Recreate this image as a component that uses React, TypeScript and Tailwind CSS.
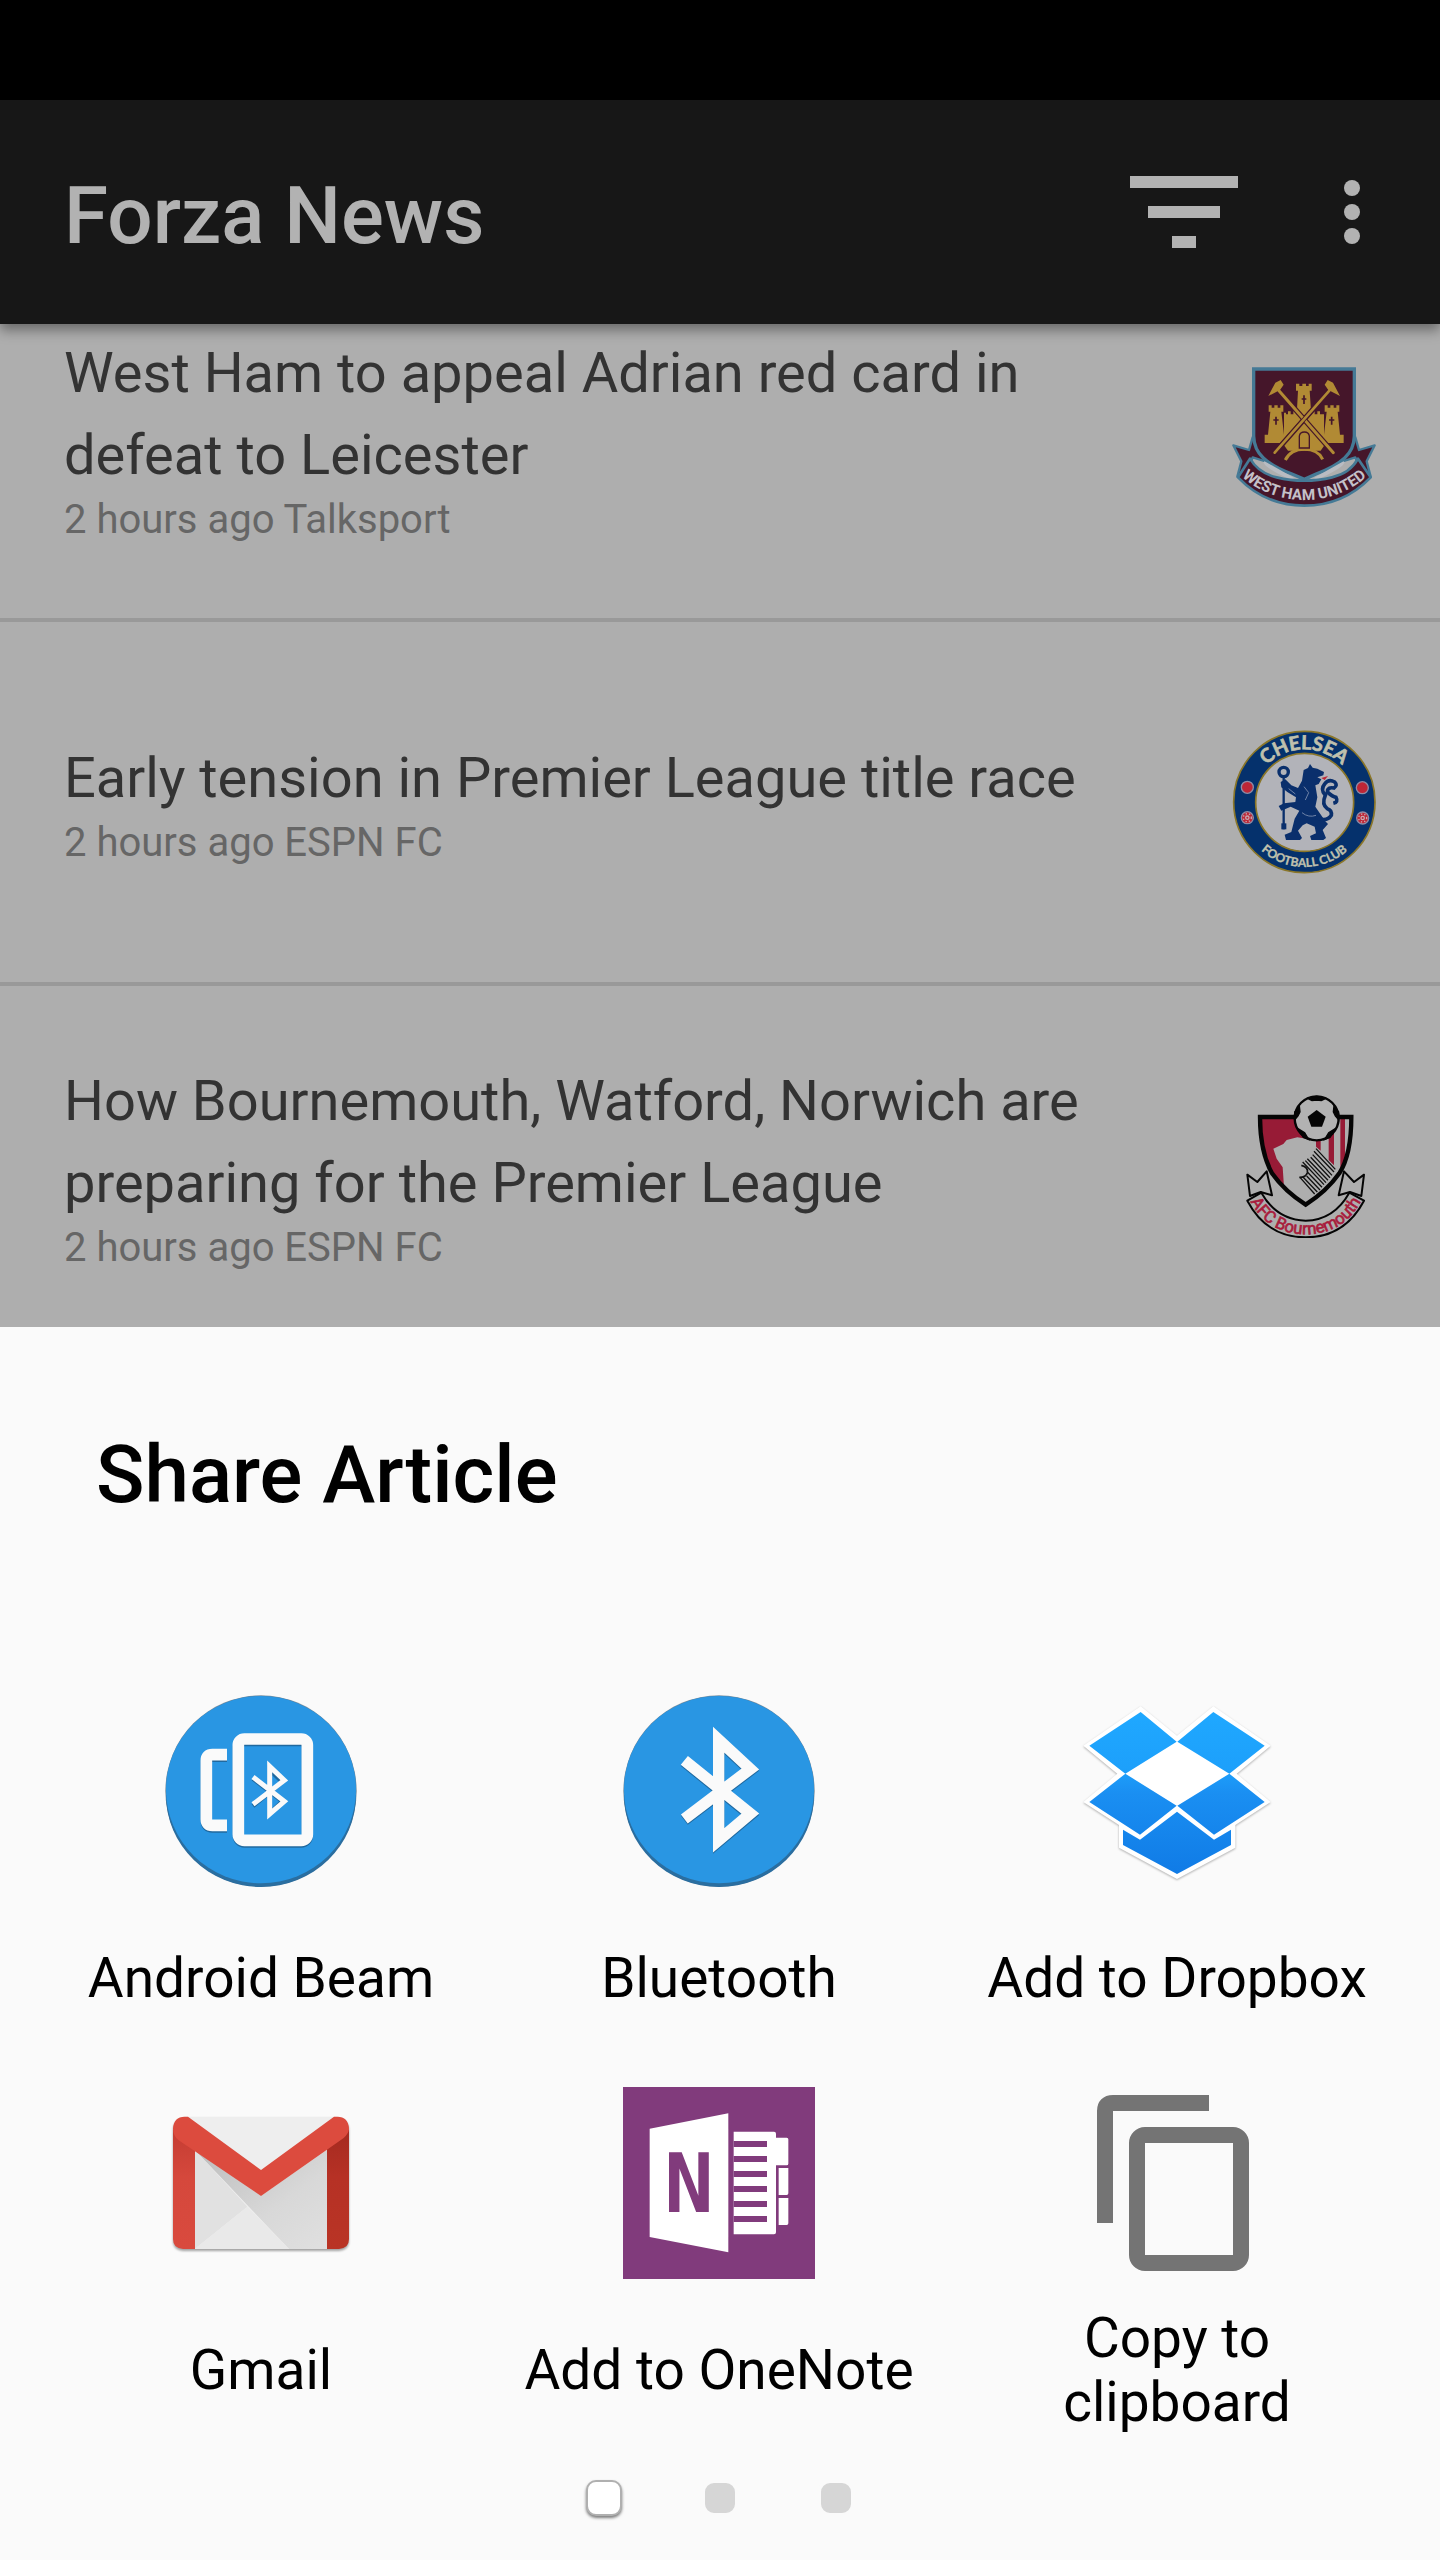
import React from 'react';

interface Article {
  title: string;
  meta: string;
  crest: React.ReactNode;
}

interface ShareTarget {
  label: string;
  icon: React.ReactNode;
}

function WestHamCrest() {
  return (
    <svg viewBox="66 48 432 432" className="size-36 shrink-0" role="img" aria-label="West Ham United">
      {/* Ribbon tails */}
      <g fill="#45162a" stroke="#457a96" strokeWidth="7" strokeLinejoin="round">
        <path d="M128 262 L117 300 L70 286 L94 334 L82 380 L108 374 L128 322 L172 336 Z" />
        <path d="M436 262 L447 300 L494 286 L470 334 L482 380 L456 374 L436 322 L392 336 Z" />
      </g>
      <path d="M131 57 H433 V258 Q432 298 404 324 Q374 352 318 372 L283 388 L246 372 Q190 352 160 324 Q132 298 131 258 Z" fill="#45162a" stroke="#457a96" strokeWidth="10" />
      <path d="M162 336 L250 386 L226 378 Q190 362 170 346 Z M402 336 L314 386 L338 378 Q374 362 394 346 Z" fill="#b9bcc2" stroke="#b9bcc2" strokeWidth="6" />
      <path d="M120 326 Q146 370 200 382 Q240 392 283 392 Q326 392 366 382 Q420 370 444 326 L482 382 Q400 467 283 467 Q166 467 84 382 Z" fill="#45162a" stroke="#457a96" strokeWidth="8" strokeLinejoin="round" />
      {/* Castle */}
      <g fill="#b18a34">
        <path d="M258 101 H268 V108 H277 V101 H288 V108 H296 V101 H305 V122 H299 L304 196 H260 L264 122 H258 Z" />
        <path d="M176 166 H185 V173 H193 V166 H203 V173 H211 V166 H220 V185 H214 L222 254 V279 H164 V254 L174 254 L181 185 H176 Z" />
        <path d="M344 166 H353 V173 H361 V166 H371 V173 H379 V166 H388 V185 H383 L390 254 L401 254 V279 H342 V254 L350 185 H344 Z" />
        <path d="M222 188 H228 V193 H234 V184 H242 V193 H250 V184 H258 V193 H306 V184 H314 V193 H322 V184 H330 V193 H342 V279 H348 L332 302 H234 L217 279 H222 Z" />
      </g>
      <path d="M226 330 Q242 298 283 298 Q324 298 338 328" fill="none" stroke="#b18a34" strokeWidth="9" />
      <path d="M268 294 V258 Q270 246 283 246 Q296 246 298 258 V294 Z" fill="#b18a34" stroke="#45162a" strokeWidth="4" />
      <path d="M282 136 V162 M275 147 H289 M198 200 V224 M190 210 H206 M365 200 V224 M357 210 H373" stroke="#45162a" strokeWidth="5" />
      {/* Crossed hammers */}
      <g fill="none" strokeLinecap="round">
        <path d="M207 122 L370 308 M358 122 L194 308" stroke="#45162a" strokeWidth="16" />
        <path d="M207 122 L370 308" stroke="#b18a34" strokeWidth="9" />
        <path d="M358 122 L194 308" stroke="#45162a" strokeWidth="13" />
        <path d="M358 122 L194 308" stroke="#b18a34" strokeWidth="8" />
      </g>
      <path d="M175 138 L196 98 L212 90 L221 104 L210 120 Z M390 138 L369 98 L353 90 L344 104 L355 120 Z" fill="#b18a34" />
      <path id="westham-arc" d="M84 370 Q170 450 283 450 Q396 450 482 370" fill="none" />
      <text fontSize="46" fontWeight="700" fill="#c4c1c9" textAnchor="middle" className="font-['Roboto',sans-serif]">
        <textPath href="#westham-arc" startOffset="50%">WEST HAM UNITED</textPath>
      </text>
    </svg>
  );
}

function ChelseaCrest() {
  return (
    <svg viewBox="66 60 432 432" className="size-36 shrink-0" role="img" aria-label="Chelsea Football Club">
      <circle cx="283" cy="276" r="212" fill="#05316c" stroke="#8a7629" strokeWidth="5" />
      <circle cx="284" cy="277" r="147" fill="#b2b3b9" stroke="#8a7629" strokeWidth="5" />
      {/* Lion */}
      <g fill="#0a2f6c">
        <path d="M281 180 L294 174 L300 162 L308 173 L322 176 L342 186 L340 196 L322 202 L334 208 L326 222 L316 226 L322 262 L316 290 L346 334 L354 342 L338 360 L348 384 L340 390 H304 L300 378 L318 370 L314 350 L290 340 L278 346 L264 362 L276 384 L270 390 H228 L224 374 L244 366 L254 326 L268 302 L242 290 L214 302 L206 288 L222 280 L256 276 L258 262 L232 246 L214 232 L212 216 L226 208 L244 226 L264 234 L276 212 Z" />
        <path d="M334 204 L354 198 L344 210 Z" fill="#bd2636" />
      </g>
      <circle cx="221" cy="186" r="14" fill="none" stroke="#0a2f6c" strokeWidth="10" />
      <path d="M221 200 V358" stroke="#0a2f6c" strokeWidth="7" />
      <path d="M214 340 H229 V358 H214 Z" fill="#0a2f6c" />
      <path d="M318 322 Q350 338 364 316 Q366 300 352 296 Q334 284 346 256 Q330 238 344 222 Q356 206 374 216 Q384 226 372 234 Q352 230 352 246 Q368 260 378 262 Q386 276 370 280" fill="none" stroke="#0a2f6c" strokeWidth="11" />
      <path d="M282 230 L296 248 L286 270 M276 308 Q296 324 318 316 M236 236 L256 252" fill="none" stroke="#6f83a8" strokeWidth="3" />
      {/* Footballs and roses */}
      <g fill="#bd2636" stroke="#8f8ba5" strokeWidth="4">
        <circle cx="112" cy="232" r="18" />
        <circle cx="457" cy="233" r="18" />
        <circle cx="112" cy="323" r="18" />
        <circle cx="458" cy="324" r="18" />
      </g>
      <g fill="none" stroke="#c8a9b0">
        <circle cx="112" cy="323" r="12" strokeWidth="4" strokeDasharray="4 6" />
        <circle cx="458" cy="324" r="12" strokeWidth="4" strokeDasharray="4 6" />
        <circle cx="112" cy="323" r="5" strokeWidth="4" />
        <circle cx="458" cy="324" r="5" strokeWidth="4" />
      </g>
      <path id="chelsea-top" d="M125 276 A158 158 0 0 1 441 276" fill="none" />
      <path id="chelsea-bottom" d="M88 276 A195 195 0 0 0 478 276" fill="none" />
      <g fill="#bfc0ad" stroke="#bfc0ad" fontWeight="700" textAnchor="middle" className="font-['Lato',sans-serif]">
        <text fontSize="58" strokeWidth="2">
          <textPath href="#chelsea-top" startOffset="50%">CHELSEA</textPath>
        </text>
        <text fontSize="36" strokeWidth="1">
          <textPath href="#chelsea-bottom" startOffset="50%">FOOTBALL CLUB</textPath>
        </text>
      </g>
    </svg>
  );
}

function BournemouthCrest() {
  return (
    <svg viewBox="66 42 432 432" className="size-36 shrink-0" role="img" aria-label="AFC Bournemouth">
      <defs>
        <clipPath id="afcb-shield">
          <path d="M152 111 H422 Q422 224 386 280 Q350 334 287 374 Q224 334 188 280 Q152 214 152 111 Z" />
        </clipPath>
      </defs>
      <g clipPath="url(#afcb-shield)">
        <path d="M140 100 H440 V390 H140 Z" fill="#aeaeae" />
        <path d="M140 100 H300 V178 L262 172 L230 180 L220 192 L190 206 L200 236 L218 262 L222 320 H140 Z" fill="#971b36" />
        <path d="M318 170 H332 V212 L318 200 Z M356 160 H372 V256 L356 240 Z M391 100 H405 V290 H391 Z" fill="#971b36" />
        <path d="M318 206 L376 268 M312 214 L372 276 M308 224 L366 286 M302 232 L360 293 M292 236 L354 301 M286 242 L348 308 M278 246 L342 314 M292 276 L336 322 M290 288 L330 330 M278 290 L322 336 M270 292 L314 342" stroke="#111" strokeWidth="4" />
        <path d="M274 256 Q296 262 292 278 Q288 292 268 292" fill="none" stroke="#111" strokeWidth="5" />
      </g>
      <path d="M150 111 H424 Q424 224 388 280 Q350 334 287 374 Q224 334 186 280 Q150 214 150 111 Z" fill="none" stroke="#050505" strokeWidth="13" />
      {/* Ball */}
      <circle cx="320" cy="115" r="66" fill="#b2b2b2" stroke="#050505" strokeWidth="7" />
      <path d="M320 90 L347 110 L336 140 H304 L293 110 Z" fill="#050505" />
      <path d="M292 55 Q320 44 348 55 L334 62 L320 60 L306 62 Z M254 120 L254 96 L268 78 L270 96 L264 108 Z M386 120 L386 96 L372 78 L370 96 L376 108 Z M264 146 L284 158 L296 178 L280 172 Z M376 146 L356 158 L344 178 L360 172 Z" fill="#050505" stroke="#050505" strokeWidth="4" />
      {/* Ribbon */}
      <g fill="#aeaeae" stroke="#050505" strokeWidth="6" strokeLinejoin="round">
        <path d="M112 284 L142 306 L170 274 L186 346 L152 336 L120 348 Z" />
        <path d="M462 284 L432 306 L402 274 L386 346 L420 336 L454 348 Z" />
        <path d="M112 362 L154 338 Q200 420 287 422 Q372 420 418 338 L462 362 Q404 472 287 472 Q170 472 112 362 Z" />
      </g>
      <path id="afcb-arc" d="M118 358 Q170 462 287 463 Q404 462 456 358" fill="none" />
      <text fontSize="50" fill="#a81c3c" stroke="#a81c3c" strokeWidth="2" textAnchor="middle" className="font-['Roboto',sans-serif]">
        <textPath href="#afcb-arc" startOffset="50%">AFC Bournemouth</textPath>
      </text>
    </svg>
  );
}

function BlueDisc({ children }: { children: React.ReactNode }) {
  return (
    <svg viewBox="0 0 576 576" className="size-48" aria-hidden="true">
      <circle cx="288" cy="288" r="287" fill="#8f9da8" />
      <path d="M3 300 A285 276 0 0 0 573 300 Z" fill="#2a6d9f" />
      <circle cx="288" cy="288" r="286" fill="#2b6fa2" fillOpacity="0.6" />
      <ellipse cx="288" cy="284" rx="285" ry="281" fill="#2996e3" />
      {children}
    </svg>
  );
}

function BeamIcon() {
  return (
    <BlueDisc>
      <g fill="none" stroke="#20699f" strokeWidth="34" transform="translate(0 5)">
        <rect x="220" y="132" width="207" height="304" rx="18" />
        <path d="M186 179 H142 Q124 179 124 197 V373 Q124 391 142 391 H186" />
        <path d="M264 246 L352 314 L314 350 V220 L352 256 L264 328" strokeWidth="13" />
      </g>
      <g fill="none" stroke="#fafafa" strokeWidth="35">
        <rect x="220" y="132" width="207" height="304" rx="18" />
        <path d="M186 179 H142 Q124 179 124 197 V373 Q124 391 142 391 H186" />
        <path d="M264 246 L358 319 L314 357 V214 L358 256 L264 328" strokeWidth="15" strokeMiterlimit="8" />
      </g>
    </BlueDisc>
  );
}

function BluetoothIcon() {
  return (
    <BlueDisc>
      <path d="M184 196 L382 356 L287 436 V134 L382 222 L184 372" transform="translate(0 4)" fill="none" stroke="#20699f" strokeWidth="34" />
      <path d="M184 196 L382 356 L287 436 V134 L382 222 L184 372" fill="none" stroke="#fafafa" strokeWidth="34" />
    </BlueDisc>
  );
}

function DropboxIcon() {
  return (
    <svg viewBox="63 48 576 576" className="size-48 drop-shadow-[0_1px_1px_rgba(0,0,0,0.3)]" aria-hidden="true">
      <defs>
        <linearGradient id="dropbox-blue" gradientUnits="userSpaceOnUse" x1="0" y1="100" x2="0" y2="584">
          <stop offset="0" stopColor="#1fa8ff" />
          <stop offset="0.35" stopColor="#1da0fb" />
          <stop offset="0.5" stopColor="#1a8ff2" />
          <stop offset="1" stopColor="#107be6" />
        </linearGradient>
      </defs>
      <path d="M242 82 L351 170 L460 82 L632 200 L530 284 L632 369 L526 438 V506 L351 600 L177 506 V438 L70 369 L172 284 L70 200 Z" fill="#fff" />
      <path d="M242 99 L350 188 L196 284 L88 200 Z M460 99 L614 200 L508 284 L352 188 Z M196 284 L350 380 L240 467 L88 369 Z M508 284 L614 369 L462 467 L352 380 Z M189 452 L240 482 L351 398 L462 482 L513 452 V498 L351 585 L189 498 Z" fill="url(#dropbox-blue)" />
    </svg>
  );
}

function GmailIcon() {
  return (
    <svg viewBox="45 24 576 576" className="size-48 drop-shadow-[0_2px_1px_rgba(0,0,0,0.35)]" aria-hidden="true">
      <defs>
        <linearGradient id="gmail-shade" x1="0" y1="0" x2="1" y2="1">
          <stop offset="0" stopColor="#bcbcbc" />
          <stop offset="0.6" stopColor="#d8d8d8" />
          <stop offset="1" stopColor="#e0e0e0" />
        </linearGradient>
        <linearGradient id="gmail-side" x1="0" y1="0" x2="0" y2="1">
          <stop offset="0" stopColor="#a42a20" />
          <stop offset="0.4" stopColor="#b63125" />
          <stop offset="1" stopColor="#b93425" />
        </linearGradient>
        <linearGradient id="gmail-left" x1="0" y1="0" x2="0" y2="1">
          <stop offset="0" stopColor="#c43c32" />
          <stop offset="0.4" stopColor="#d5483c" />
          <stop offset="1" stopColor="#d94a3e" />
        </linearGradient>
      </defs>
      <path d="M100 113 H566 V510 H100 Z" fill="#eee" />
      <path d="M134 212 L292 383 L134 510 Z" fill="#e1e1e1" />
      <path d="M134 212 L333 350 L531 212 V510 H417 Z" fill="url(#gmail-shade)" />
      <path d="M292 383 L417 510 H134 Z" fill="#e9e9e9" />
      <path d="M69 150 L135 205 V510 H99 Q69 508 69 480 Z" fill="url(#gmail-left)" />
      <path d="M597 150 L531 205 V510 H567 Q597 508 597 480 Z" fill="url(#gmail-side)" />
      <path d="M69 148 Q71 114 104 113 H114 L333 273 L552 113 H562 Q595 114 597 148 Q597 164 580 178 L333 351 L86 184 Q69 172 69 148 Z" fill="#dc4b3e" />
    </svg>
  );
}

function OneNoteIcon() {
  return (
    <svg viewBox="69 54 576 576" className="size-48" aria-hidden="true">
      <path d="M69 54 H645 V630 H69 Z" fill="#813b7c" />
      <path d="M149 179 L385 133 V550 L149 504 Z" fill="#fff" />
      <path d="M401 188 H522 Q528 188 528 194 V206 H560 Q565 206 565 211 V284 Q565 289 560 289 H528 V490 Q528 496 522 496 H401 Z" fill="#fff" />
      <path d="M536 297 H565 V373 Q565 378 560 378 H536 Z M536 387 H565 V463 Q565 468 560 468 H536 Z" fill="#fff" />
      <path d="M401 225 H501 M401 270 H501 M401 315 H501 M401 360 H501 M401 405 H501 M401 450 H501" stroke="#813b7c" strokeWidth="18" />
      <text x="267" y="430" fontSize="246" fontWeight="700" fill="#813b7c" textAnchor="middle" className="font-['DejaVu_Sans_Mono',monospace]">
        N
      </text>
    </svg>
  );
}

function CopyIcon() {
  return (
    <svg viewBox="63 54 576 576" className="size-48" aria-hidden="true">
      <path d="M447 102 H159 Q135 102 135 126 V462" fill="none" stroke="#747474" strokeWidth="48" />
      <rect x="231" y="198" width="312" height="384" rx="24" fill="#fafafa" stroke="#747474" strokeWidth="48" />
      <path d="M255 222 H519 V558 H255 Z" fill="#fafafa" />
    </svg>
  );
}

const articles: Article[] = [
  {
    title: 'West Ham to appeal Adrian red card in defeat to Leicester',
    meta: '2 hours ago Talksport',
    crest: <WestHamCrest />,
  },
  {
    title: 'Early tension in Premier League title race',
    meta: '2 hours ago ESPN FC',
    crest: <ChelseaCrest />,
  },
  {
    title: 'How Bournemouth, Watford, Norwich are preparing for the Premier League',
    meta: '2 hours ago ESPN FC',
    crest: <BournemouthCrest />,
  },
];

const targets: ShareTarget[] = [
  { label: 'Android Beam', icon: <BeamIcon /> },
  { label: 'Bluetooth', icon: <BluetoothIcon /> },
  { label: 'Add to Dropbox', icon: <DropboxIcon /> },
  { label: 'Gmail', icon: <GmailIcon /> },
  { label: 'Add to OneNote', icon: <OneNoteIcon /> },
  { label: 'Copy to clipboard', icon: <CopyIcon /> },
];

function Header() {
  return (
    <header className="relative z-10 flex h-56 shrink-0 items-center bg-[#171717] pl-16 pr-12 text-[#b2b2b2] shadow-[0_6px_12px_rgba(0,0,0,0.4)]">
      <h1 className="flex-1 pt-2 text-[80px] leading-[96px] font-medium">Forza News</h1>
      <button type="button" aria-label="Filter" className="mr-14 flex size-36 items-center justify-center">
        <svg viewBox="0 0 108 72" className="w-[108px]" fill="currentColor">
          <path d="M0 0 H108 V12 H0 Z M18 30 H90 V42 H18 Z M42 60 H66 V72 H42 Z" />
        </svg>
      </button>
      <button type="button" aria-label="More options" className="flex h-36 w-20 items-center justify-center">
        <svg viewBox="0 0 16 64" className="h-16 w-4" fill="currentColor">
          <circle cx="8" cy="8" r="8" />
          <circle cx="8" cy="32" r="8" />
          <circle cx="8" cy="56" r="8" />
        </svg>
      </button>
    </header>
  );
}

function ArticleRow({ title, meta, crest }: Article) {
  return (
    <li className="flex h-[364px] items-center justify-between border-b-4 border-[#999] px-16">
      <a href="#" className="block max-w-[1080px]">
        <h2 className="text-[56px] leading-[82px] text-[#333]">{title}</h2>
        <p className="text-[40px] leading-[48px] text-[#666]">{meta}</p>
      </a>
      {crest}
    </li>
  );
}

function ShareSheet() {
  return (
    <section aria-labelledby="share-title" className="shrink-0 bg-[#fafafa] pb-11 text-black">
      <h2 id="share-title" className="px-24 pt-[100px] text-[80px] leading-[96px] font-medium">
        Share Article
      </h2>
      <ul className="mt-[172px] grid grid-cols-3 gap-y-[43px] pr-[34px] pl-8">
        {targets.map((target) => (
          <li key={target.label}>
            <button type="button" className="flex w-full flex-col items-center">
              {target.icon}
              <span className="mt-[25px] flex h-[132px] max-w-[400px] items-center text-[55px] leading-[64px]">
                {target.label}
              </span>
            </button>
          </li>
        ))}
      </ul>
      <nav aria-label="Pages" className="mt-11 flex justify-center gap-20">
        <button
          type="button"
          aria-label="Page 1"
          aria-current="page"
          className="size-9 rounded-[10px] border-2 border-[#b0b0b0] bg-white shadow-[0_2px_3px_rgba(0,0,0,0.5)]"
        />
        <button type="button" aria-label="Page 2" className="size-9 rounded-xl border-3 border-[#fafafa] bg-[#d6d6d6]" />
        <button type="button" aria-label="Page 3" className="size-9 rounded-xl border-3 border-[#fafafa] bg-[#d6d6d6]" />
      </nav>
    </section>
  );
}

function App() {
  return (
    <div className="flex h-screen flex-col bg-[#aeaeae] font-['Roboto',sans-serif]">
      <div className="h-25 shrink-0 bg-black" />
      <Header />
      <main className="min-h-0 flex-1 overflow-hidden">
        {/* List is scrolled part way under the header */}
        <ul className="-mt-16.5">
          {articles.map((article) => (
            <ArticleRow key={article.title} {...article} />
          ))}
        </ul>
      </main>
      <ShareSheet />
    </div>
  );
}

export default App;
